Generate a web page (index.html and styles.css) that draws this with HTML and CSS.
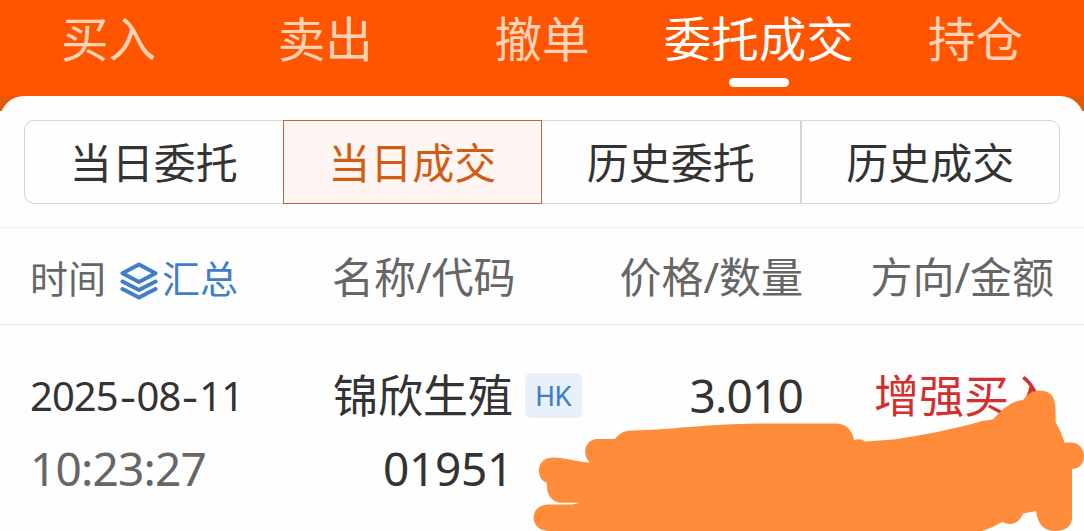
FILE: index.html
```html
<!DOCTYPE html>
<html lang="zh-CN">
<head>
    <meta charset="UTF-8">
    <meta name="viewport" content="width=device-width, initial-scale=1.0">
    <title>当日成交</title>
    <link rel="stylesheet" href="styles.css">
</head>
<body>
    <nav class="tabs">
        <a class="tab">买入</a>
        <a class="tab">卖出</a>
        <a class="tab">撤单</a>
        <a class="tab active">委托成交</a>
        <a class="tab">持仓</a>
    </nav>

    <main class="content">
        <div class="panel">
            <div class="segments">
                <div class="segment">当日委托</div>
                <div class="segment selected">当日成交</div>
                <div class="segment">历史委托</div>
                <div class="segment">历史成交</div>
            </div>

            <div class="row table-head">
                <div class="col-time">
                    <span>时间</span>
                    <svg class="layers" width="38" height="38" viewBox="0 0 38 38">
                        <path d="M19 2.5 L35.5 11.3 L19 20 L2.5 11.3 Z"/>
                        <path d="M2.5 19.5 L19 28 L35.5 19.5"/>
                        <path d="M2.5 27 L19 35.5 L35.5 27"/>
                    </svg>
                    <span class="summary">汇总</span>
                </div>
                <div class="col-name">名称/代码</div>
                <div class="col-price">价格/数量</div>
                <div class="col-side">方向/金额</div>
            </div>

            <div class="row deal">
                <div class="col-time">
                    <div class="date">2025<span class="dash">-</span>08<span class="dash">-</span>11</div>
                    <div class="time">10:23:27</div>
                </div>
                <div class="col-name">
                    <div class="stock">锦欣生殖</div>
                    <div class="code">01951</div>
                </div>
                <div class="market">HK</div>
                <div class="col-price price">3.010</div>
                <div class="col-side buy">增强买入</div>

                <!-- brush strokes hiding the quantity and amount -->
                <svg class="scribble" width="564" height="161" viewBox="0 0 564 161">
                    <path d="M27 134.500 H52 L60 132.800 H40 C31 132 26 123 27 113 C15 109 16 88 32 87.500 C43 87 57 92 70 92.500 C61 84 65 69 78 69 H95 C99 63 105 60.500 112 60.500 C150 60 185 54 240 53.500 H317 C326 54 333 61 334 70 Q341 68 345 71.500 L374 69.500 C402 65 432 60 462 51 L473 49.500 C483 38 492 31 503 30 C509 22 516 20 523 21 C532 22 536 29 535.500 42 V52 Q541 61 544.500 72.500 H552 C559 73 564 79 564 86 C564 94 559 99 552 99 V149 C551 157 545 161 535 161 C524 161 518 155 516 141 L503 143.500 C499 154 491 156 482 152 Q474 157 462 161 H27 C9 159 9 136 27 134.500 Z"/>
                </svg>
            </div>
        </div>
    </main>
</body>
</html>
```
FILE: styles.css
```css
* {
    box-sizing: border-box;
}
body {
    margin: 0;
    height: 531px;
    overflow: hidden;
    font-family: "Noto Sans", "Noto Sans CJK SC", sans-serif;
    color: #333;
    background: #fefefe;
}
.tabs {
    display: flex;
    height: 96px;
    background: #ff5500;
}
.tab {
    flex: 1;
    display: flex;
    flex-direction: column;
    align-items: center;
    font-size: 47.5px;
    line-height: 78px;
    color: #ffd3b8;
}
.tab.active {
    color: #fff;
}
.tab.active::after {
    content: "";
    width: 60px;
    height: 9px;
    border-radius: 5px;
    background: #fff;
}
.content {
    background: linear-gradient(#e65708 15px, #fefefe 15px);
}
.panel {
    padding-top: 24px;
    border-radius: 24px 24px 0 0;
    background: #fefefe;
}
.segments {
    display: flex;
    height: 84px;
    margin: 0 24px 23px;
}
.segment {
    flex: 1;
    border: 1px solid #d3d6d8;
    font-size: 42px;
    line-height: 83px;
    text-align: center;
}
.segment:first-child {
    border-right: none;
    border-radius: 10px 0 0 10px;
}
.segment:nth-child(3) {
    border-left: none;
}
.segment:last-child {
    border-radius: 0 10px 10px 0;
}
.segment.selected {
    border-color: #b9683c;
    background: #fff6f3;
    color: #d35c14;
}
.row {
    display: grid;
    grid-template-columns: 303px 180px 69px 221px 251px;
    padding-left: 30px;
}
.table-head {
    height: 98px;
    border-top: 1px solid #f3f3f3;
    border-bottom: 1px solid #ebebeb;
    font-size: 42px;
    line-height: 97px;
    color: #666;
    white-space: nowrap;
}
.table-head .col-time {
    display: flex;
    align-items: center;
    font-size: 38px;
    padding-top: 2px;
}
.table-head .col-name {
    margin-left: -1px;
}
.table-head .col-price {
    grid-column: 4;
}
.layers {
    margin: 5px 4px 0 14px;
    fill: none;
    stroke: #3f7fc9;
    stroke-width: 4;
    stroke-linejoin: round;
    stroke-linecap: round;
}
.summary {
    color: #3f7fc9;
}
.col-price,
.col-side {
    text-align: right;
}
.deal {
    position: relative;
    height: 206px;
    padding-top: 34px;
    line-height: 74px;
    white-space: nowrap;
}
.date {
    font-size: 40px;
    letter-spacing: -1px;
}
.dash {
    display: inline-block;
    width: 19px;
    text-align: center;
    transform: scaleX(1.25);
}
.time {
    font-size: 46px;
    line-height: 70px;
    color: #666;
    letter-spacing: -0.8px;
}
.stock {
    font-size: 45px;
}
.code {
    font-size: 46px;
    line-height: 70px;
    text-align: right;
    letter-spacing: -0.3px;
}
.market {
    width: 57px;
    height: 45px;
    margin: 14px 0 0 12px;
    border-radius: 6px;
    background: #e8f1fa;
    color: #3f7fc9;
    font: 27px/49px Roboto, sans-serif;
    text-align: center;
}
.price {
    font-size: 46px;
    line-height: 73px;
    letter-spacing: -0.8px;
}
.buy {
    font-size: 45px;
    color: #d32f2f;
}
.scribble {
    position: absolute;
    left: 520px;
    top: 45px;
    fill: #ff8c3a;
}
```
